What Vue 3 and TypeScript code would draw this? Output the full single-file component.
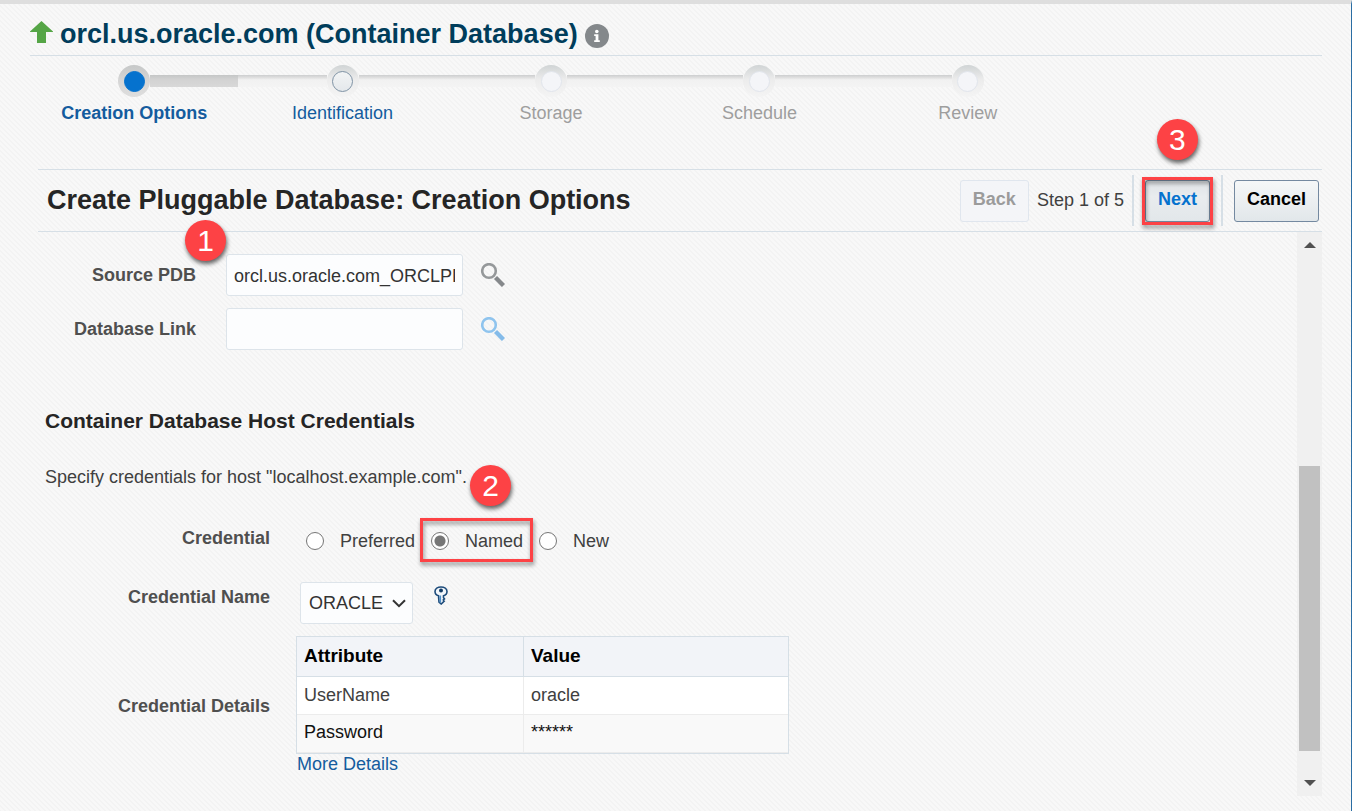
<script setup lang="ts">
import { ref } from 'vue'

interface Step {
  label: string
  state: 'current' | 'next' | 'disabled'
}

const steps: Step[] = [
  { label: 'Creation Options', state: 'current' },
  { label: 'Identification', state: 'next' },
  { label: 'Storage', state: 'disabled' },
  { label: 'Schedule', state: 'disabled' },
  { label: 'Review', state: 'disabled' },
]

const sourcePdb = ref('orcl.us.oracle.com_ORCLPDB')
const databaseLink = ref('')
const credentialTypes = ['Preferred', 'Named', 'New']
const credentialType = ref('Named')
const credentialName = ref('ORACLE')
const details = [
  { attribute: 'UserName', value: 'oracle' },
  { attribute: 'Password', value: '******' },
]
</script>

<template>
  <div class="page">
    <header class="header">
      <svg class="up-arrow" viewBox="0 0 23 22" aria-hidden="true">
        <path d="M11.5 0 23 10.500V11H16V22H7V11H0V10.500Z" fill="#55a546" />
      </svg>
      <h1>orcl.us.oracle.com (Container Database)</h1>
      <svg class="info" viewBox="0 0 24 24" aria-hidden="true">
        <circle cx="12" cy="12" r="12" fill="#84888b" />
        <circle cx="11.800" cy="7.500" r="1.800" fill="#fff" />
        <path d="M9.200 10.300H13.400V16.300H14.800V18H9.200V16.300H10.600V12H9.200Z" fill="#fff" />
      </svg>
    </header>

    <nav class="train" aria-label="Progress">
      <div v-for="step in steps" :key="step.label" class="step" :class="step.state">
        <div class="rail-row">
          <span class="rail"></span>
          <span class="ring"><span class="dot"></span></span>
          <span class="rail"></span>
        </div>
        <a v-if="step.state !== 'disabled'" href="#" class="step-label">{{ step.label }}</a>
        <span v-else class="step-label">{{ step.label }}</span>
      </div>
    </nav>

    <main class="panel">
      <div class="toolbar">
        <h2>Create Pluggable Database: Creation Options</h2>
        <button type="button" class="btn" disabled>Back</button>
        <span class="step-count">Step 1 of 5</span>
        <span class="separator"></span>
        <div class="callout-anchor">
          <button type="button" class="btn next-btn">Next</button>
          <span class="frame frame-next"></span>
          <span class="badge badge-next">3</span>
        </div>
        <span class="separator"></span>
        <button type="button" class="btn">Cancel</button>
      </div>

      <div class="scroller">
        <div class="content">
          <div class="source-form">
            <label for="source-pdb">Source PDB</label>
            <div class="callout-anchor">
              <input id="source-pdb" v-model="sourcePdb" type="text" class="field" />
              <span class="badge badge-source">1</span>
            </div>
            <button type="button" class="icon-btn lens" aria-label="Search source PDB">
              <svg viewBox="0 0 24 24" fill="none">
                <circle cx="8" cy="8" r="6.800" stroke="#95989a" stroke-width="2.600" />
                <path d="M14.500 14.500 22.500 22.500" stroke="#85888b" stroke-width="4.400" />
              </svg>
            </button>
            <label for="db-link">Database Link</label>
            <input id="db-link" v-model="databaseLink" type="text" class="field" />
            <button type="button" class="icon-btn lens" aria-label="Search database link">
              <svg viewBox="0 0 24 24" fill="none">
                <circle cx="8" cy="8" r="6.800" stroke="#8fc4ee" stroke-width="2.600" />
                <path d="M14.500 14.500 22.500 22.500" stroke="#84bbe9" stroke-width="4.400" />
              </svg>
            </button>
          </div>

          <h3>Container Database Host Credentials</h3>
          <p class="hint">Specify credentials for host "localhost.example.com".</p>

          <div class="row">
            <span id="cred-label" class="row-label">Credential</span>
            <div class="radios" role="radiogroup" aria-labelledby="cred-label">
              <label v-for="type in credentialTypes" :key="type" class="radio">
                <input v-model="credentialType" type="radio" name="credential" :value="type" />
                {{ type }}
                <template v-if="type === 'Named'">
                  <span class="frame frame-named"></span>
                  <span class="badge badge-named">2</span>
                </template>
              </label>
            </div>
          </div>

          <div class="row name-row">
            <label for="cred-name" class="row-label">Credential Name</label>
            <div class="select-wrap">
              <select id="cred-name" v-model="credentialName" class="field">
                <option>ORACLE</option>
              </select>
              <svg class="chevron" viewBox="0 0 14 9" aria-hidden="true">
                <path d="M1 1.200 7 7.200 13 1.200" fill="none" stroke="#333" stroke-width="2" />
              </svg>
            </div>
            <button type="button" class="icon-btn key" aria-label="Test credential">
              <svg viewBox="0 0 14 19">
                <path
                  d="M4.500 9.800C2.300 9.200 1 7.800 1 5.600 1 2.800 3.800 1 7 1S13 2.800 13 5.600C13 7.800 11.700 9.200 9.500 9.800V11.800L10.500 13 9.300 14 10.200 15.200 7.200 18 5 16.200Z"
                  fill="#f2f6fa"
                  stroke="#1d4b7a"
                  stroke-width="1.600"
                />
                <path d="M6.300 9.500V16.500" stroke="#4e8fc7" stroke-width="1.600" />
                <circle cx="7" cy="4.600" r="2" fill="#123c66" />
              </svg>
            </button>
          </div>

          <div class="row details-row">
            <span id="details-label" class="row-label">Credential Details</span>
            <div class="details">
              <table aria-labelledby="details-label">
                <thead>
                  <tr>
                    <th scope="col">Attribute</th>
                    <th scope="col">Value</th>
                  </tr>
                </thead>
                <tbody>
                  <tr v-for="row in details" :key="row.attribute">
                    <td>{{ row.attribute }}</td>
                    <td>{{ row.value }}</td>
                  </tr>
                </tbody>
              </table>
              <a href="#" class="more">More Details</a>
            </div>
          </div>
        </div>

        <div class="scrollbar" aria-hidden="true">
          <svg class="arrow" viewBox="0 0 12 6"><path d="M0 6 6 0 12 6Z" fill="#505050" /></svg>
          <span class="space-above"></span>
          <span class="thumb"></span>
          <span class="space-below"></span>
          <svg class="arrow" viewBox="0 0 12 6"><path d="M0 0 6 6 12 0Z" fill="#505050" /></svg>
        </div>
      </div>
    </main>
  </div>
</template>

<style>
body {
  margin: 0;
}
</style>

<style scoped>
* {
  box-sizing: border-box;
}

.page {
  display: flex;
  flex-direction: column;
  min-height: 100vh;
  padding: 0 29px 15px 30px;
  border-top: 4px solid #dedede;
  border-right: 1px solid #2a6da3;
  background: linear-gradient(45deg, #f8f8f8 25%, #f3f3f3 25% 50%, #f8f8f8 50% 75%, #f3f3f3 75%);
  background-size: 5px 5px;
  color: #404040;
  font-family: 'Liberation Sans', Arial, sans-serif;
  font-size: 18px;
  line-height: 24px;
}

h1,
h2,
h3,
p {
  margin: 0;
}

a {
  color: #145c9e;
  text-decoration: none;
}

button,
input,
select {
  margin: 0;
  font: inherit;
}

.header {
  display: flex;
  align-items: center;
  height: 52px;
  padding-top: 12px;
  border-bottom: 1px solid #d6dfe6;
}

.up-arrow {
  width: 23px;
  height: 22px;
  margin-right: 7px;
  margin-bottom: 8px;
}

h1 {
  padding-bottom: 4px;
  color: #003d5b;
  font-size: 27px;
  line-height: 32px;
}

.info {
  width: 24px;
  height: 24px;
  margin-left: 7px;
}

.train {
  display: flex;
  max-width: 1042px;
  margin-top: 9px;
}

.step {
  flex: 1;
  text-align: center;
}

.rail-row {
  display: flex;
  align-items: center;
}

.rail {
  flex: 1;
  height: 12px;
  background: linear-gradient(#cccecf, #dedede 20%, #f1f1f1 40%, #f4f4f4);
}

.step:first-child .rail:first-child,
.step:last-child .rail:last-child {
  visibility: hidden;
}

.current .rail {
  background: linear-gradient(#c4c6c6, #d2d2d2 35%, #d8d8d8);
}

.ring {
  display: flex;
  align-items: center;
  justify-content: center;
  width: 32px;
  height: 32px;
  border-radius: 50%;
  background: linear-gradient(#d0d4d5, #ececec 45%, #f4f4f4);
}

.current .ring {
  background: linear-gradient(#c6c8c8, #d6d6d6 50%, #dedede);
}

.dot {
  width: 21px;
  height: 21px;
  border: 1px solid #e1e5ec;
  border-radius: 50%;
  background: #f4f5f8;
}

.next .dot {
  border-color: #7f93a5;
  background: linear-gradient(#f2f4f5, #e4e8eb);
}

.current .dot {
  border-color: #0572ce;
  background: #0572ce;
}

.step-label {
  display: block;
  margin-top: 4px;
  color: #9e9e9e;
}

.next .step-label {
  color: #145c9e;
}

.current .step-label {
  color: #145c9e;
  font-weight: bold;
}

.panel {
  display: flex;
  flex: 1;
  flex-direction: column;
  margin: 44px 0 0 8px;
}

.toolbar {
  display: flex;
  align-items: center;
  height: 63px;
  padding: 0 3px 0 9px;
  border-top: 1px solid #d6dfe6;
  border-bottom: 1px solid #d6dfe6;
}

h2 {
  flex: 1;
  padding-bottom: 2px;
  color: #252525;
  font-size: 27px;
  line-height: 32px;
}

.btn {
  height: 42px;
  padding: 0 12px 4px;
  border: 1px solid #7489a0;
  border-radius: 3px;
  background: linear-gradient(#f5f7f8, #e2e7ea);
  color: #000;
  font-weight: bold;
}

.btn:disabled {
  border-color: #e0e6ee;
  background: #f4f5f8;
  color: #9b9b9b;
}

.next-btn {
  display: block;
  background: linear-gradient(#dfe3e6, #e9ecee 40%, #e2e7ea);
  color: #0572ce;
}

.step-count {
  margin: 0 8px;
  padding-bottom: 2px;
}

.separator {
  width: 2px;
  height: 51px;
  background: #d6dfe6;
}

.separator + * {
  margin-left: 11px;
}

.callout-anchor + .separator {
  margin-left: 11px;
}

.callout-anchor,
.radio {
  position: relative;
}

.frame {
  position: absolute;
  border: 3px solid #fd4245;
  filter: drop-shadow(1px 3px 2px rgba(0, 0, 0, 0.45));
  pointer-events: none;
}

.frame-next {
  inset: -3px;
}

.frame-named {
  inset: -11px -10px -9px -11px;
}

.badge {
  position: absolute;
  width: 41px;
  height: 41px;
  border-radius: 50%;
  background: #fd4245;
  box-shadow: 1px 3px 4px rgba(0, 0, 0, 0.6);
  color: #fff;
  font-size: 30px;
  line-height: 41px;
  text-align: center;
}

.badge-next {
  top: -61px;
  left: 12px;
}

.badge-source {
  top: -34px;
  left: -41px;
}

.badge-named {
  top: -64px;
  left: 39px;
}

.scroller {
  display: flex;
  flex: 1;
}

.content {
  flex: 1;
  padding: 22px 0 0 7px;
}

.source-form {
  display: grid;
  grid-template-columns: 163px 237px 24px;
  gap: 12px 18px;
  align-items: center;
}

.source-form label {
  padding-right: 12px;
  color: #4f4f4f;
  font-weight: bold;
  text-align: right;
}

.field {
  display: block;
  width: 100%;
  height: 42px;
  padding: 0 8px;
  border: 1px solid #dde4ea;
  border-radius: 3px;
  background: #fcfdfe;
  color: #333;
}

input.field {
  padding: 2px 7px 0;
}

.icon-btn {
  padding: 0;
  border: 0;
  background: none;
}

.icon-btn svg {
  display: block;
  width: 100%;
  height: 100%;
}

.lens {
  width: 24px;
  height: 24px;
}

h3 {
  margin-top: 58px;
  color: #252525;
  font-size: 21px;
  line-height: 26px;
}

.hint {
  margin-top: 31px;
}

.row {
  display: flex;
  align-items: flex-start;
  margin-top: 37px;
}

.row-label {
  width: 225px;
  color: #4f4f4f;
  font-weight: bold;
  text-align: right;
}

.radios {
  display: flex;
  gap: 16px;
  padding: 3px 0 0 36px;
}

.radio {
  display: flex;
  align-items: center;
  gap: 16px;
}

.radio input {
  appearance: none;
  width: 18px;
  height: 18px;
  border: 1px solid #767676;
  border-radius: 50%;
  background: #fff;
}

.radio input:checked {
  background: radial-gradient(circle, #767676 5px, #fff 6px);
}

.name-row {
  margin-top: 29px;
}

.name-row .row-label {
  padding-top: 3px;
}

.select-wrap {
  display: grid;
  align-items: center;
  width: 113px;
  margin-left: 30px;
}

.select-wrap > * {
  grid-area: 1 / 1;
}

.select-wrap .field {
  appearance: none;
}

.chevron {
  justify-self: end;
  width: 14px;
  height: 9px;
  margin-right: 7px;
  pointer-events: none;
}

.key {
  width: 14px;
  height: 19px;
  margin: 4px 0 0 21px;
}

.details-row {
  align-items: center;
  margin-top: 12px;
}

.details {
  margin-left: 26px;
}

table {
  width: 493px;
  border: 1px solid #d6dfe6;
  border-collapse: separate;
  border-spacing: 0;
  table-layout: fixed;
}

th,
td {
  padding: 0 7px 2px;
  text-align: left;
}

th {
  height: 40px;
  border-bottom: 1px solid #d6dfe6;
  background: #f2f4f8;
  color: #000;
  font-size: 19px;
}

th:first-child {
  width: 227px;
  border-right: 1px solid #d6dfe6;
}

td {
  height: 38px;
  border-bottom: 1px solid #ececec;
  background: #fff;
}

td:first-child {
  border-right: 1px solid #ececec;
}

tr:last-child td {
  padding-bottom: 4px;
  background: #f9f9f9;
  color: #111;
}

.more {
  display: block;
  width: fit-content;
  margin-top: -2px;
  margin-left: 1px;
}

.scrollbar {
  display: flex;
  flex-direction: column;
  align-items: center;
  width: 25px;
  background: #f0f0f0;
}

.arrow {
  width: 12px;
  height: 6px;
  margin: 10px 0;
}

.space-above {
  flex: 208;
}

.thumb {
  flex: 285;
  width: 21px;
  background: #c1c1c1;
}

.space-below {
  flex: 19;
}
</style>
